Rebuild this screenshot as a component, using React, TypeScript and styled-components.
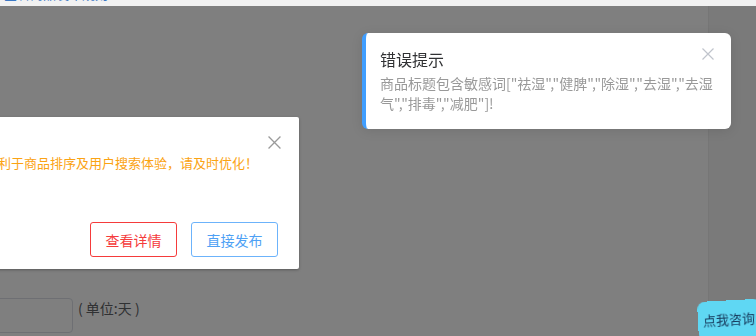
import React from 'react';
import styled, { createGlobalStyle } from 'styled-components';

const GlobalStyle = createGlobalStyle`
  html, body {
    margin: 0;
    padding: 0;
    height: 100%;
    overflow: hidden;
  }
  body {
    font-family: "Noto Sans CJK SC", "Liberation Sans", sans-serif;
    background: #fff;
  }
`;

const Page = styled.div`
  display: flex;
  flex-direction: column;
  width: 756px;
  height: 336px;
  overflow: hidden;
`;

const TopStrip = styled.div`
  height: 6px;
  flex: none;
  overflow: hidden;
  background: #f1f1f1;
  padding-left: 4px;
`;

const TopLink = styled.a`
  display: block;
  margin-top: -15px;
  font-size: 13px;
  line-height: 17px;
  color: #3b78c4;
  text-decoration: none;
`;

const Body = styled.div`
  position: relative;
  flex: 1;
  display: flex;
`;

const MainCol = styled.div`
  flex: 1;
  background: #fff;
  padding-top: 292px;
  overflow: hidden;
`;

const SideCol = styled.div`
  width: 47px;
  background: #f4f4f4;
  border-left: 1px solid #ededed;
`;

const FormRow = styled.div`
  display: flex;
  align-items: flex-start;
  gap: 5px;
  margin-left: -107px;
`;

const Input = styled.div`
  width: 180px;
  height: 35px;
  box-sizing: border-box;
  border: 1px solid #dcdfe6;
  border-radius: 4px;
  background: #fff;
`;

const Unit = styled.span`
  font-size: 14px;
  line-height: 20px;
  color: #606266;
`;

const Overlay = styled.div`
  position: absolute;
  inset: 0;
  background: rgba(0, 0, 0, 0.5);
`;

const Dialog = styled.div`
  position: absolute;
  left: -178px;
  top: 111px;
  width: 477px;
  height: 152px;
  background: #fff;
  border-radius: 2px;
  box-shadow: 0 1px 3px rgba(0, 0, 0, 0.3);
  display: flex;
  flex-direction: column;
`;

const DialogHeader = styled.div`
  padding: 16px 20px 0;
  height: 20px;
  font-size: 16px;
  line-height: 20px;
  color: #303133;
`;

const DialogClose = styled.button`
  position: absolute;
  top: 19px;
  right: 18px;
  width: 13px;
  height: 13px;
  padding: 0;
  border: 0;
  background: none;
  display: flex;
`;

const DialogText = styled.div`
  padding: 0 20px;
  font-size: 13px;
  line-height: 20px;
  color: #fba313;
  white-space: nowrap;
`;

const DialogFooter = styled.div`
  display: flex;
  justify-content: flex-end;
  gap: 14px;
  padding: 49px 21px 12px;
`;

const Button = styled.button<{ $tone: 'red' | 'blue' }>`
  width: 87px;
  height: 35px;
  box-sizing: border-box;
  border-radius: 3px;
  background: #fff;
  font-family: inherit;
  font-size: 14px;
  border: 1px solid ${(p) => (p.$tone === 'red' ? '#f53b3b' : '#6cb3fb')};
  color: ${(p) => (p.$tone === 'red' ? '#f53b3b' : '#4ea1f5')};
`;

const Notification = styled.div`
  position: fixed;
  top: 33px;
  left: 362px;
  width: 369px;
  height: 96px;
  box-sizing: border-box;
  background: #fff;
  border-left: 4px solid #409eff;
  border-radius: 6px;
  box-shadow: 0 2px 12px rgba(0, 0, 0, 0.1);
  padding: 14px 10px 14px 14px;
`;

const NoteTitle = styled.div`
  font-size: 16px;
  line-height: 24px;
  color: #303133;
`;

const NoteText = styled.div`
  margin-top: 2px;
  font-size: 14px;
  line-height: 20px;
  color: #999;
  white-space: nowrap;
`;

const NoteClose = styled.button`
  position: absolute;
  top: 15px;
  right: 17px;
  width: 12px;
  height: 12px;
  padding: 0;
  border: 0;
  background: none;
  display: flex;
`;

const Consult = styled.div`
  position: fixed;
  left: 697px;
  top: 302px;
  width: 64px;
  height: 40px;
  box-sizing: border-box;
  padding: 9px 0 0 5px;
  background: #5fd7f3;
  border-radius: 8px;
  transform: rotate(-3deg);
  transform-origin: left top;
  font-size: 13px;
  line-height: 20px;
  color: #163a5c;
  z-index: 10;
`;

const Cross = ({ size, color }: { size: number; color: string }) => (
  <svg width={size} height={size} viewBox="0 0 12 12">
    <path d="M0.5 0.5 L11.5 11.5 M11.5 0.5 L0.5 11.5" stroke={color} strokeWidth="1.2" fill="none" />
  </svg>
);

export default function App() {
  return (
    <>
      <GlobalStyle />
      <Page>
        <TopStrip>
          <TopLink href="#">查看商品发布规则</TopLink>
        </TopStrip>
        <Body>
          <MainCol>
            <FormRow>
              <Input />
              <Unit>( 单位:天 )</Unit>
            </FormRow>
          </MainCol>
          <SideCol />
          <Overlay>
            <Dialog>
              <DialogHeader>提示</DialogHeader>
              <DialogClose aria-label="关闭">
                <Cross size={13} color="#9a9a9a" />
              </DialogClose>
              <DialogText>商品标题包含敏感词，将不利于商品排序及用户搜索体验，请及时优化！</DialogText>
              <DialogFooter>
                <Button $tone="red">查看详情</Button>
                <Button $tone="blue">直接发布</Button>
              </DialogFooter>
            </Dialog>
          </Overlay>
        </Body>
        <Notification>
          <NoteTitle>错误提示</NoteTitle>
          <NoteText>
            商品标题包含敏感词["祛湿","健脾","除湿","去湿","去湿
            <br />
            气","排毒","减肥"]!
          </NoteText>
          <NoteClose aria-label="关闭">
            <Cross size={12} color="#c0c4cc" />
          </NoteClose>
        </Notification>
        <Consult>点我咨询</Consult>
      </Page>
    </>
  );
}
